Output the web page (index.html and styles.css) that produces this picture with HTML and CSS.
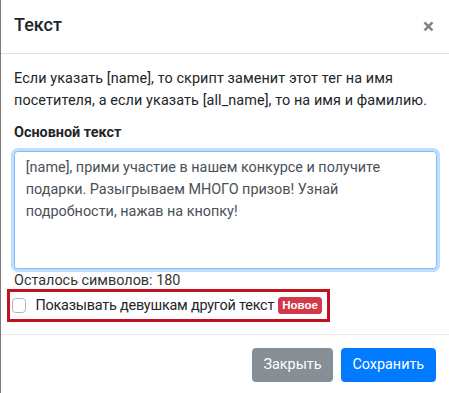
FILE: index.html
```html
<!DOCTYPE html>
<html lang="ru">
<head>
<meta charset="utf-8">
<link rel="stylesheet" href="styles.css">
</head>
<body>
<div class="modal">
  <div class="modal-header">
    <h5 class="modal-title">Текст</h5>
    <span class="close">&times;</span>
  </div>
  <div class="modal-body">
    <p class="hint">Если указать [name], то скрипт заменит этот тег на имя<br>посетителя, а если указать [all_name], то на имя и фамилию.</p>
    <label class="field-label">Основной текст</label>
    <textarea class="text-input">[name], прими участие в нашем конкурсе и получите
подарки. Разыгрываем МНОГО призов! Узнай
подробности, нажав на кнопку!</textarea>
    <div class="counter">Осталось символов: 180</div>
    <div class="highlight">
      <label class="check">
        <span class="check-box"></span>
        <span class="check-label">Показывать девушкам другой текст</span>
        <span class="badge">Новое</span>
      </label>
    </div>
  </div>
  <div class="modal-footer">
    <button class="btn btn-secondary">Закрыть</button>
    <button class="btn btn-primary">Сохранить</button>
  </div>
</div>
</body>
</html>
```
FILE: styles.css
```css
html, body {
  margin: 0;
  padding: 0;
  background: #ffffff;
}
body {
  font-family: Roboto, "Noto Sans", sans-serif;
  font-size: 14.4px;
  line-height: 21.6px;
  color: #212529;
  width: 449px;
  height: 393px;
  overflow: hidden;
}
.modal {
  width: 450px;
  margin-top: -3px;
  border-left: 1px solid #7a7a7a;
  background: #fff;
  box-sizing: border-box;
}
.modal-header {
  display: flex;
  align-items: center;
  justify-content: space-between;
  padding: 14.4px 14.4px 14.4px 13px;
  border-bottom: 1px solid #dee2e6;
}
.modal-title {
  margin: 0;
  font-size: 18px;
  line-height: 27px;
  font-weight: 500;
  color: #212529;
}
.close {
  font-family: "Noto Sans", sans-serif;
  font-size: 21.6px;
  font-weight: 700;
  color: #000;
  opacity: .5;
  line-height: 1;
  margin-right: 1px;
  margin-top: 2px;
}
.modal-body {
  padding: 14.4px 14.4px 12px 13px;
}
.hint {
  margin: 0 0 11px 0;
  white-space: nowrap;
  letter-spacing: 0.1px;
}
.field-label {
  display: block;
  font-weight: 700;
  margin-bottom: 7px;
}
.text-input {
  display: block;
  box-sizing: border-box;
  width: 423px;
  height: 118px;
  padding: 5.4px 10.8px;
  font-family: inherit;
  font-size: 14.4px;
  line-height: 21.6px;
  color: #495057;
  border: 1px solid #80bdff;
  border-radius: 3.6px;
  box-shadow: 0 0 0 3px rgba(0, 123, 255, .25);
  outline: none;
  resize: none;
  overflow: hidden;
  margin: 0;
}
.counter {
  color: #333;
  margin-top: 1px;
}
.highlight {
  margin: -3px 0 0 -7px;
  width: 323px;
  height: 33px;
  box-sizing: border-box;
  border: 3px solid #c1121f;
  padding: 0 0 0 2px;
}
.check {
  display: flex;
  align-items: center;
  height: 21.6px;
  margin-top: 3px;
  white-space: nowrap;
}
.check-box {
  width: 14.4px;
  height: 14.4px;
  border: 1px solid #adb5bd;
  border-radius: 3.6px;
  background: #fff;
  box-sizing: border-box;
  margin-right: 9px;
  flex: none;
}
.check-label {
  color: #212529;
  letter-spacing: -0.2px;
}
.badge {
  margin-left: 4px;
  color: #fff;
  font-family: "Liberation Sans", Arial, sans-serif;
  font-weight: 700;
  font-size: 11.5px;
  line-height: 1;
  padding: 2.5px 4px 2.5px 4px;
  border-radius: 3.6px;
  background: #d2394b;
}
.modal-footer {
  display: flex;
  justify-content: flex-end;
  align-items: center;
  gap: 7.2px;
  padding: 13.5px 14px 14px 10.8px;
  border-top: 1px solid #e9ecef;
}
.btn {
  font-family: inherit;
  font-size: 14.4px;
  line-height: 21.6px;
  padding: 5.4px 10.8px;
  border-radius: 3.6px;
  border: 1px solid transparent;
  color: #fff;
  cursor: pointer;
}
.btn-secondary {
  background: #868e96;
  border-color: #868e96;
}
.btn-primary {
  background: #007bff;
  border-color: #007bff;
}
```
